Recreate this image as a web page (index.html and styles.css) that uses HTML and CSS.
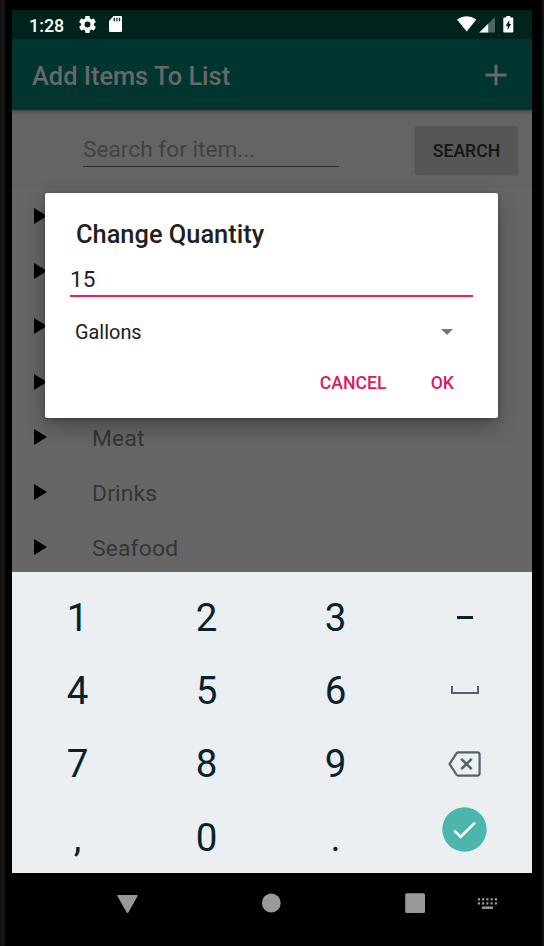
FILE: index.html
```html
<!DOCTYPE html>
<html lang="en">
<head>
<meta charset="utf-8">
<title>Add Items To List</title>
<link rel="stylesheet" href="styles.css">
</head>
<body>
<div class="phone">
  <div class="screen">
    <header class="status">
      <span class="clock">1:28</span>
      <svg class="gear" width="18" height="18" viewBox="2 2 20 20"><path fill="#fff" d="M19.43 12.98c.04-.32.07-.64.07-.98s-.03-.66-.07-.98l2.11-1.65c.19-.15.24-.42.12-.64l-2-3.46c-.12-.22-.39-.3-.61-.22l-2.49 1c-.52-.4-1.08-.73-1.69-.98l-.38-2.65A.49.49 0 0 0 14 2h-4c-.25 0-.46.18-.49.42l-.38 2.65c-.61.25-1.17.59-1.69.98l-2.49-1c-.23-.09-.49 0-.61.22l-2 3.46c-.13.22-.07.49.12.64l2.11 1.65c-.04.32-.07.65-.07.98s.03.66.07.98l-2.11 1.65c-.19.15-.24.42-.12.64l2 3.46c.12.22.39.3.61.22l2.49-1c.52.4 1.08.73 1.69.98l.38 2.65c.03.24.24.42.49.42h4c.25 0 .46-.18.49-.42l.38-2.65c.61-.25 1.17-.59 1.69-.98l2.49 1c.23.09.49 0 .61-.22l2-3.46c.12-.22.07-.49-.12-.64zM12 15.5a3.5 3.5 0 1 1 0-7 3.5 3.5 0 0 1 0 7z"/></svg>
      <svg class="card" width="13" height="16" viewBox="0 0 13 16"><path fill="#fff" d="M4.5 0H11.8Q13 0 13 1.2V14.8Q13 16 11.8 16H1.2Q0 16 0 14.8V5z"/><path stroke="#00231e" stroke-width="1.3" d="M5.3 1.8v3.4M7.9 1.8v3.4M10.5 1.8v3.4"/></svg>
      <svg class="signals" width="57" height="17" viewBox="0 0 57 17"><path fill="#fff" d="M0 3.6Q9.600-3.200 19.400 3.600L9.700 15.500z"/><path fill="#4d6561" d="M38 1V16.500H22.400z"/><path fill="#fff" d="M31.200 7.800V16.500H22.400z"/><path fill="#fff" d="M49.300 0h4v1.500h2q1 0 1 1V15.500q0 1-1 1h-8q-1 0-1-1V2.500q0-1 1-1h2z"/><path fill="#00231e" d="M52.300 4.200V8h1.800L50.600 14V9.800h-2z"/></svg>
    </header>
    <div class="toolbar">
      <h1>Add Items To List</h1>
      <svg width="22" height="22" viewBox="0 0 22 22"><path stroke="#686868" stroke-width="2.900" d="M.5 11h21M11 .5v21"/></svg>
    </div>
    <main class="content">
      <div class="search">
        <div class="field">Search for item...</div>
        <div class="search-btn">SEARCH</div>
      </div>
      <ul class="list">
        <li><i></i></li>
        <li><i></i></li>
        <li><i></i></li>
        <li><i></i></li>
        <li><i></i><span>Meat</span></li>
        <li><i></i><span>Drinks</span></li>
        <li><i></i><span>Seafood</span></li>
      </ul>
    </main>
    <div class="keyboard">
      <span>1</span><span>2</span><span>3</span><span><b class="minus"></b></span>
      <span>4</span><span>5</span><span>6</span><span><b class="space"></b></span>
      <span>7</span><span>8</span><span>9</span>
      <span><svg width="33" height="26" viewBox="0 0 33 26" fill="none" stroke="#51626b" stroke-width="2.200"><path stroke-linejoin="round" d="M10.300 1.400H29.300Q31.600 1.400 31.600 3.700V22.300Q31.600 24.600 29.300 24.600H10.300Q9.200 24.600 8.500 23.600L1.500 13L8.500 2.400Q9.200 1.400 10.300 1.400z"/><path stroke-width="2.500" d="M13.300 7.800L23.700 18.200M23.700 7.800L13.300 18.200"/></svg></span>
      <span>,</span><span>0</span><span>.</span>
      <span><svg class="done" width="45" height="45" viewBox="0 0 45 45"><circle cx="22.500" cy="22.500" r="22.200" fill="#4db6ac"/><path fill="none" stroke="#fff" stroke-width="2.600" d="M12.300 23.600L18.600 30L33 15.600"/></svg></span>
    </div>
    <nav class="nav">
      <svg width="520" height="62" viewBox="0 0 520 62" fill="#999"><path stroke="#999" stroke-width="1.500" stroke-linejoin="round" d="M106 22.700H125L115.500 39.300z"/><circle cx="259.300" cy="30" r="9.400"/><rect x="393.200" y="20.300" width="19.800" height="19.800" rx="1.500"/><path stroke="#999" stroke-width="2.200" stroke-dasharray="2.200 2.050" d="M465.800 26.300H486M465.800 30.300H486"/><path d="M470 33.500h11v2.400h-11z"/></svg>
    </nav>
    <section class="dialog">
      <h2>Change Quantity</h2>
      <div class="quantity">15</div>
      <div class="unit"><span>Gallons</span><i></i></div>
      <div class="actions"><span>CANCEL</span><span>OK</span></div>
    </section>
  </div>
</div>
</body>
</html>
```

FILE: styles.css
```css
* { box-sizing: border-box; }
body { margin: 0; background: #000; font-family: Roboto, sans-serif; }
h1, h2 { margin: 0; padding: 0; font-weight: 500; }
ul { margin: 0; padding: 0; }
svg { display: block; flex: none; }
.phone {
  width: 544px; height: 946px; padding: 10px 12px 0; overflow: hidden;
  background: linear-gradient(90deg, #0a0a0a 0, #1c1c1c 3px, #000 6px, #000 541px, #141414 543px);
}
.screen { position: relative; width: 520px; height: 936px; display: flex; flex-direction: column; background: #000; }
.status { height: 29px; display: flex; align-items: center; padding: 0 18px 0 17px; background: #00231e; color: #fff; }
.clock { font-size: 17.900px; font-weight: 500; line-height: 29px; width: 35px; padding-top: 1px; }
.gear { margin: -1px 0 0 15px; width: 17px; height: 17px; }
.card { margin: -1px 0 0 13px; }
.signals { margin: -1px 0 0 auto; }
.toolbar {
  position: relative; height: 71px; display: flex; align-items: center; justify-content: space-between;
  padding: 0 25px 0 20px; background: #003530; color: #686868; box-shadow: 0 1px 4px rgba(0,0,0,.45);
}
.toolbar h1 { font-size: 25.400px; line-height: 30px; padding-top: 3px; }
.content { height: 461.500px; background: #666; overflow: hidden; }
.search { height: 78px; display: flex; align-items: flex-start; padding: 16px 14px 0 71px; background: #646464; }
.field { width: 256px; height: 41px; border-bottom: 1.500px solid #303030; font-size: 22.700px; line-height: 48px; color: #424242; }
.search-btn {
  width: 103px; height: 48px; margin-left: auto; border-radius: 3px; background: #565656;
  box-shadow: 0 1px 2px rgba(0,0,0,.2); color: #151515; font-size: 17.600px; font-weight: 500; line-height: 51px; text-align: center;
}
.list { list-style: none; }
.list li { height: 55.300px; display: flex; align-items: center; padding-left: 22px; color: #353535; font-size: 22.800px; }
.list i { width: 0; border: 8.500px solid transparent; border-left: 13.500px solid #000; border-right: 0; }
.list span { margin: 3px 0 0 45px; letter-spacing: .2px; }
.keyboard {
  height: 301px; padding: 9.500px 2px 0 1px; display: grid; grid-template-columns: repeat(4, 129px);
  grid-auto-rows: 73.200px; background: #ebeff2; color: #07222c; font-size: 38.500px;
}
.keyboard span { display: flex; align-items: center; justify-content: center; }
.minus { width: 16px; height: 2.700px; background: #07222c; }
.space { width: 28px; height: 8px; margin-top: -2px; border: 2px solid #51626b; border-top: 0; }
.done { margin-top: -16px; }
.nav { height: 62px; }
.dialog {
  position: absolute; left: 33px; top: 183px; width: 453px; height: 225px; padding: 24px 25px 0;
  border-radius: 2px; background: #fff; box-shadow: 0 9px 22px rgba(0,0,0,.3), 0 1px 4px rgba(0,0,0,.25); color: #212121;
}
.dialog h2 { padding-left: 6px; font-size: 25.400px; line-height: 34px; }
.quantity { height: 46px; font-size: 22.500px; line-height: 56px; border-bottom: 2px solid #de2262; }
.unit { height: 70px; padding: 0 20px 0 5px; display: flex; align-items: center; justify-content: space-between; font-size: 19.900px; }
.unit i { width: 0; border: 6px solid transparent; border-top-color: #757575; border-bottom: 0; }
.actions { display: flex; justify-content: flex-end; gap: 44px; padding-right: 19px; color: #d81b60; font-size: 17.700px; font-weight: 500; line-height: 32px; }
```
